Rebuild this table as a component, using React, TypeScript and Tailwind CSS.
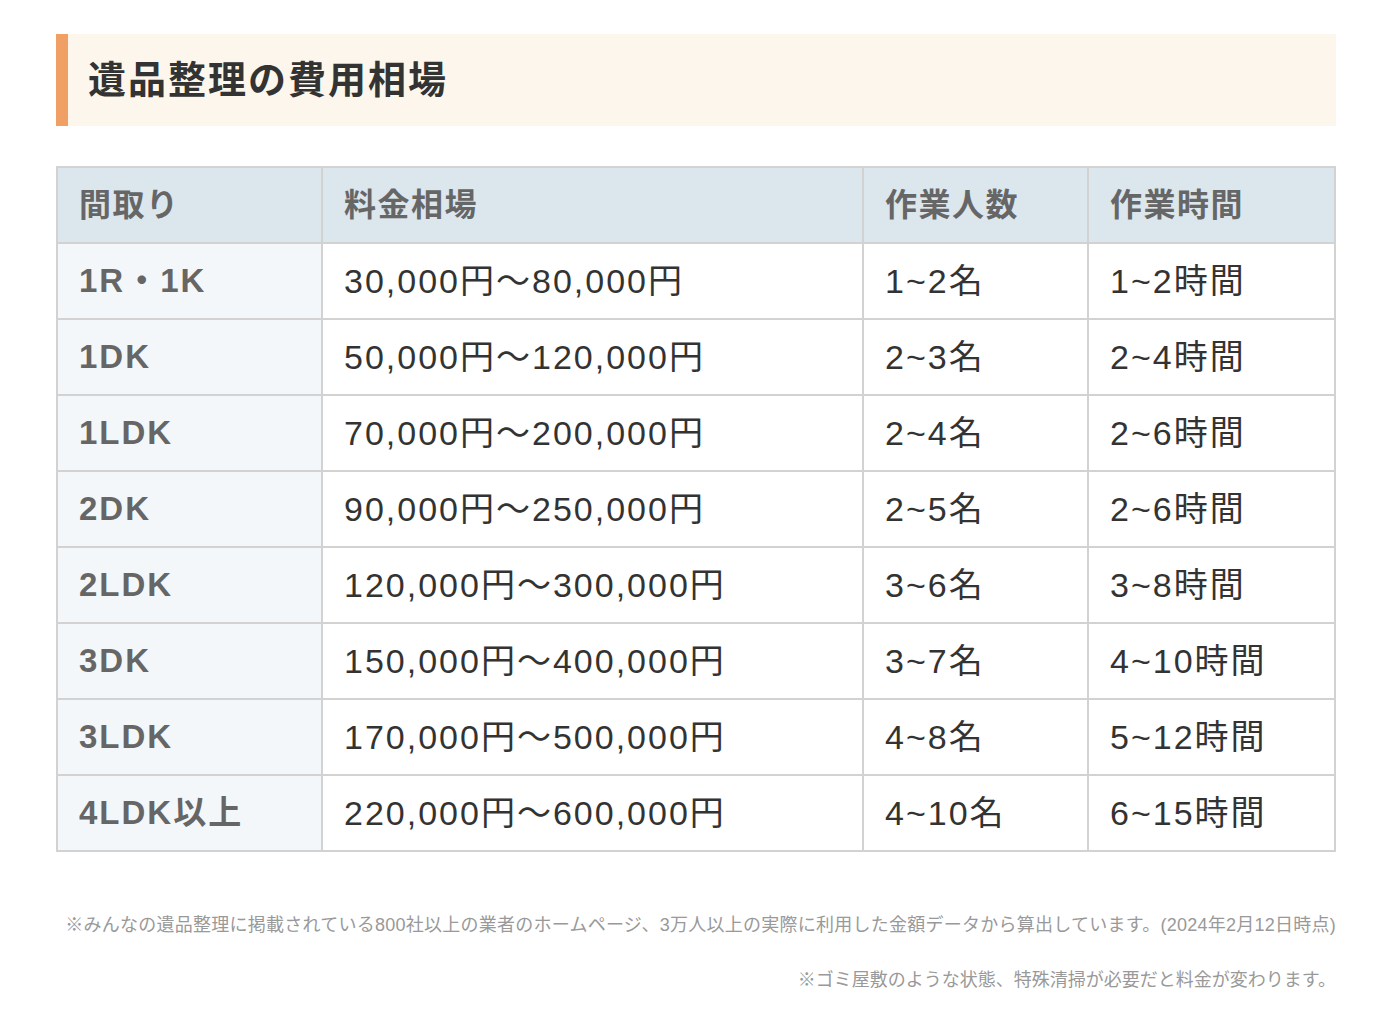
const rows = [
  ['1R・1K', '30,000円～80,000円', '1~2名', '1~2時間'],
  ['1DK', '50,000円～120,000円', '2~3名', '2~4時間'],
  ['1LDK', '70,000円～200,000円', '2~4名', '2~6時間'],
  ['2DK', '90,000円～250,000円', '2~5名', '2~6時間'],
  ['2LDK', '120,000円～300,000円', '3~6名', '3~8時間'],
  ['3DK', '150,000円～400,000円', '3~7名', '4~10時間'],
  ['3LDK', '170,000円～500,000円', '4~8名', '5~12時間'],
  ['4LDK以上', '220,000円～600,000円', '4~10名', '6~15時間'],
];

const font = { fontFamily: '"Liberation Sans", "Noto Sans CJK JP", sans-serif' };

export default function App() {
  return (
    <div className="min-h-[1014px] bg-white pt-[34px]" style={font}>
      <div className="ml-[56px] w-[1280px]">
        <h2 className="flex h-[92px] items-center border-l-[12px] border-[#f0a064] bg-[#fcf6ec] pl-[20px] text-[38px] font-bold tracking-[2px] text-[#333]">
          遺品整理の費用相場
        </h2>

        <table className="mt-[40px] w-[1278px] table-fixed border-collapse border-2 border-[#d2d2d2]">
          <colgroup>
            <col className="w-[265px]" />
            <col className="w-[541px]" />
            <col className="w-[225px]" />
            <col className="w-[247px]" />
          </colgroup>
          <thead>
            <tr className="h-[76px] bg-[#dbe6ed]">
              {['間取り', '料金相場', '作業人数', '作業時間'].map(h => (
                <th key={h} className="border-2 border-[#d2d2d2] pl-[21px] text-left text-[32px] font-bold tracking-[1.5px] text-[#666]">
                  {h}
                </th>
              ))}
            </tr>
          </thead>
          <tbody>
            {rows.map(([plan, price, staff, time]) => (
              <tr key={plan} className="h-[76px]">
                <td className="border-2 border-[#d2d2d2] bg-[#f4f7fa] pl-[21px] text-[33px] font-bold tracking-[2px] text-[#666]">{plan}</td>
                <td className="border-2 border-[#d2d2d2] pl-[21px] text-[34px] tracking-[2px] text-[#333]">{price}</td>
                <td className="border-2 border-[#d2d2d2] pl-[21px] text-[34px] tracking-[2px] text-[#333]">{staff}</td>
                <td className="border-2 border-[#d2d2d2] pl-[21px] text-[34px] tracking-[2px] text-[#333]">{time}</td>
              </tr>
            ))}
          </tbody>
        </table>

        <p className="mt-[60px] text-right text-[18px] tracking-[0.25px] text-[#999]">
          ※みんなの遺品整理に掲載されている800社以上の業者のホームページ、3万人以上の実際に利用した金額データから算出しています。(2024年2月12日時点)
        </p>
        <p className="mt-[28px] text-right text-[18px] text-[#999]">
          ※ゴミ屋敷のような状態、特殊清掃が必要だと料金が変わります。
        </p>
      </div>
    </div>
  );
}
